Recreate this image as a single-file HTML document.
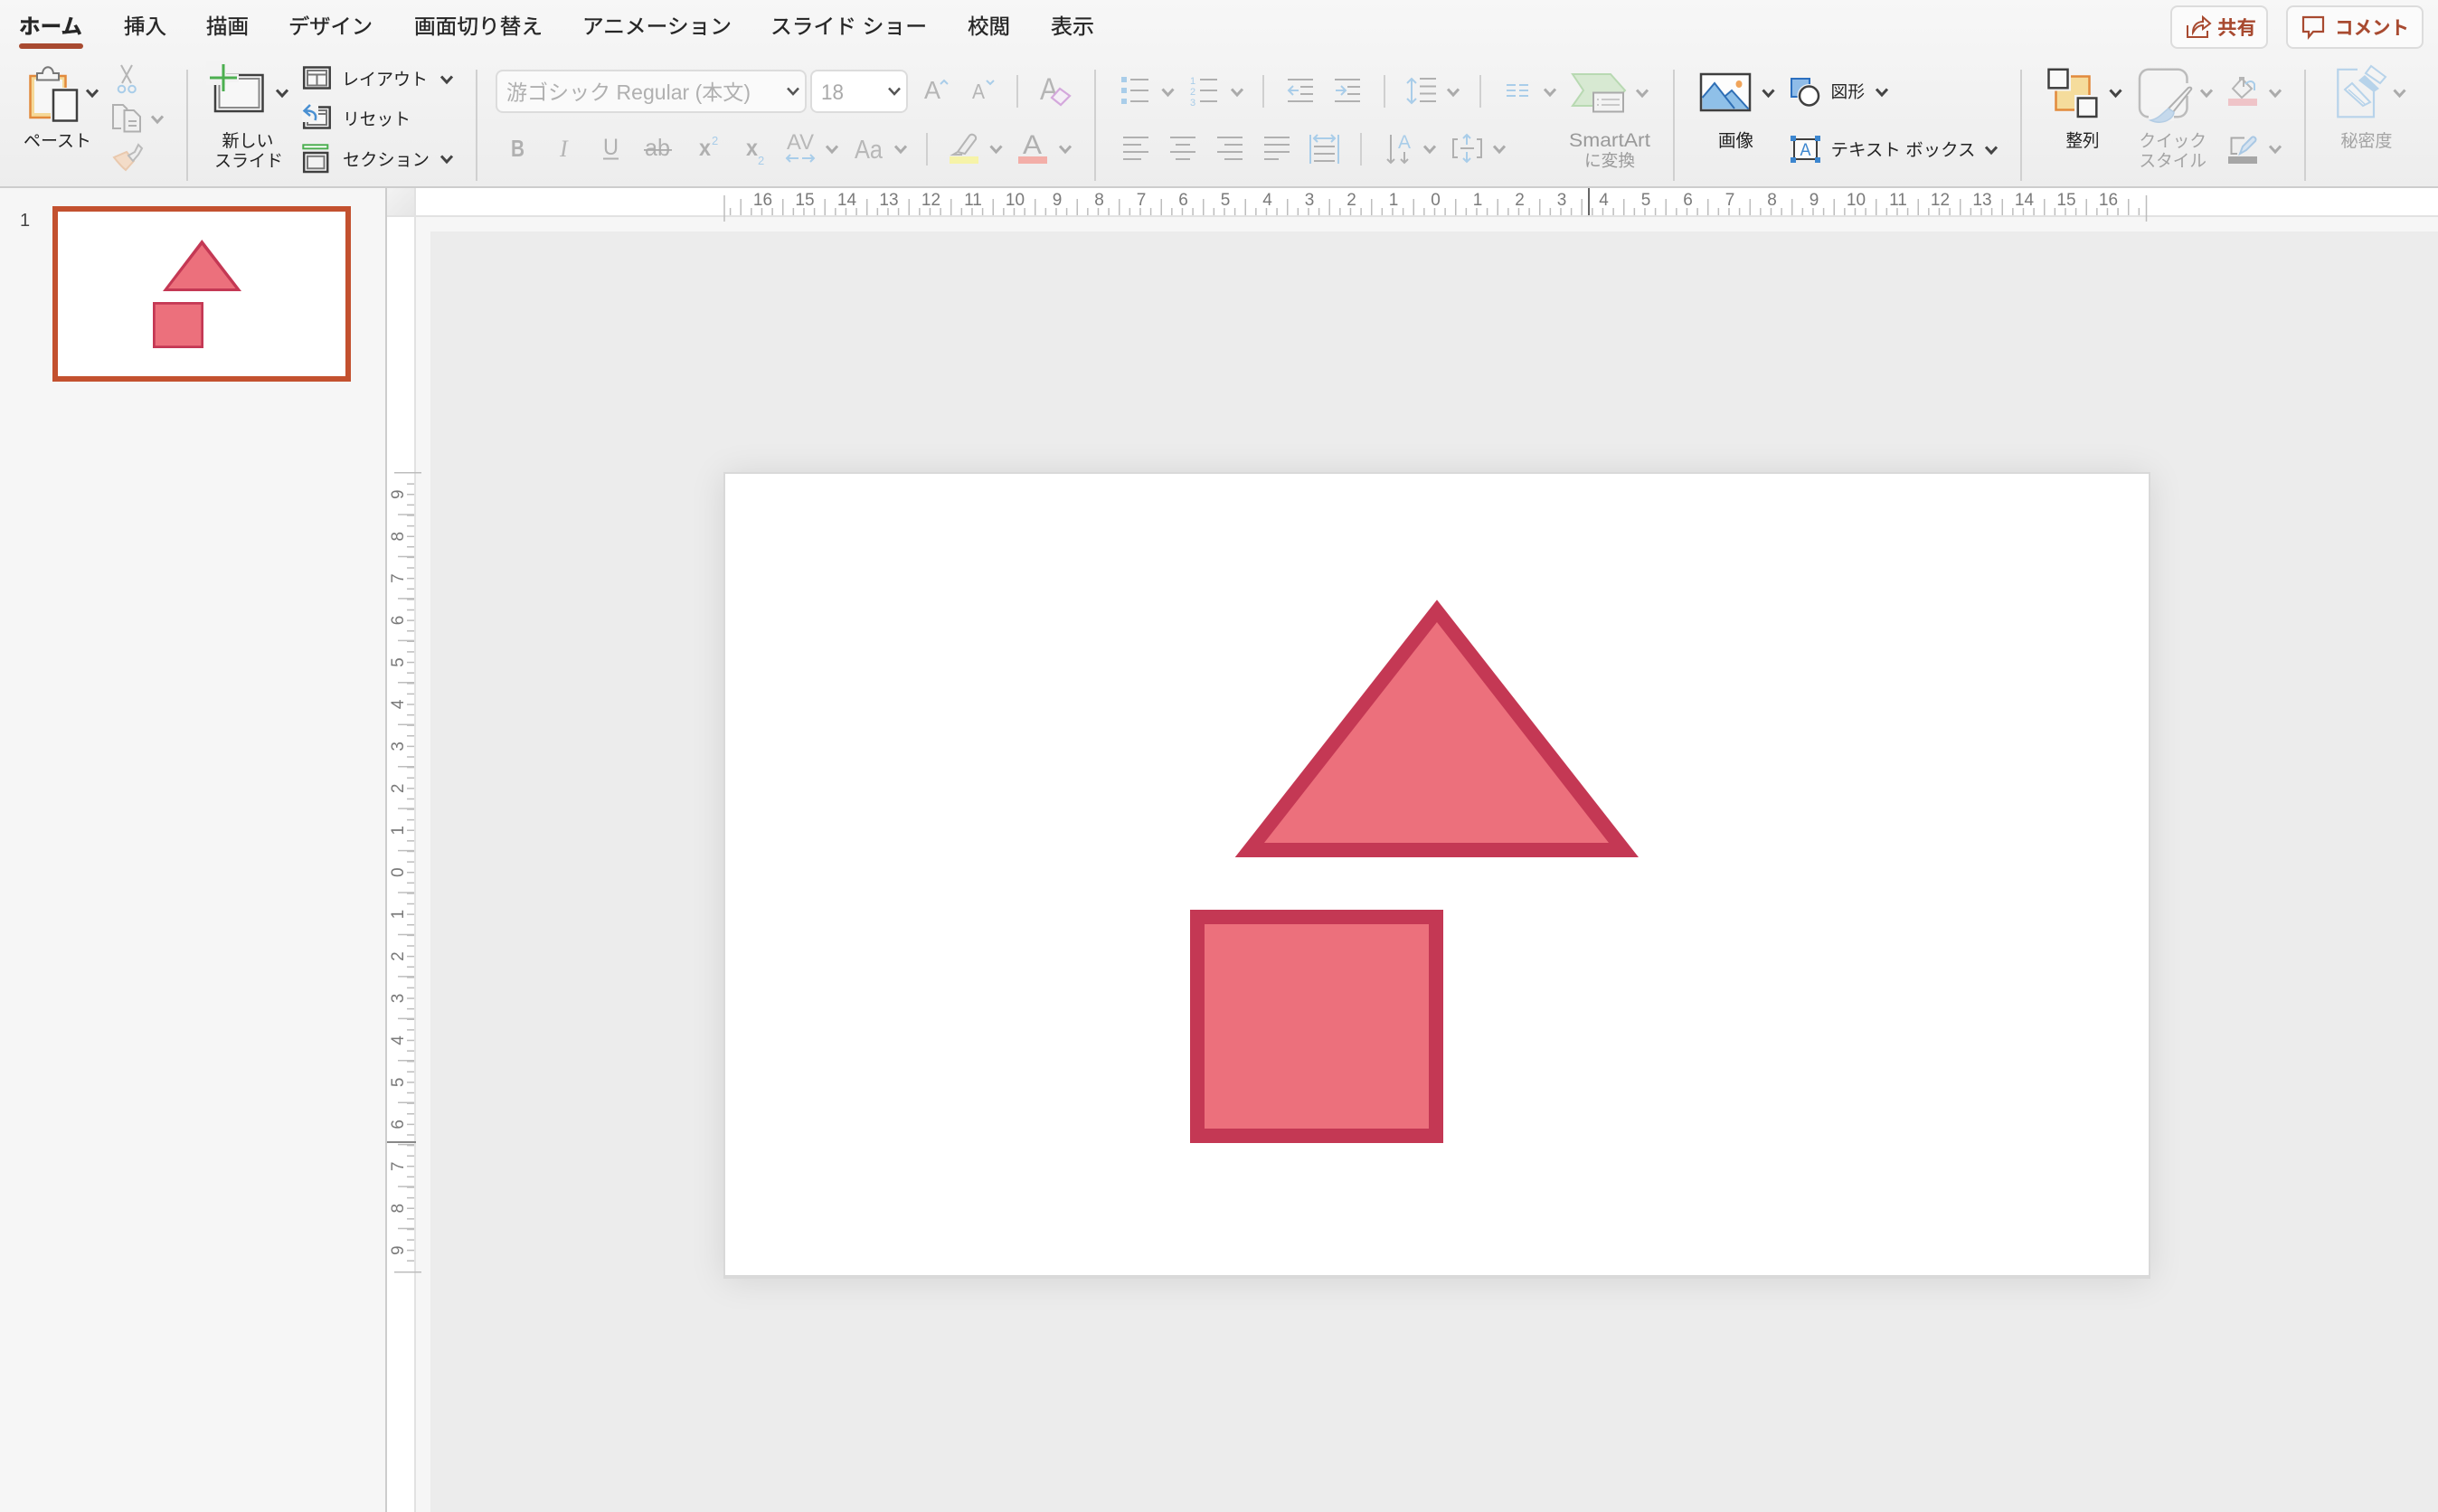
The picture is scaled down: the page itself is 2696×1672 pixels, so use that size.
<!DOCTYPE html>
<html lang="ja"><head><meta charset="utf-8"><title>PowerPoint</title>
<style>
html,body{margin:0;padding:0;width:2696px;height:1672px;overflow:hidden;background:#f6f6f6}
.abs{position:absolute}
#ribbon{left:0;top:0;width:2696px;height:206px;background:linear-gradient(#f7f7f7,#ededed);border-bottom:2px solid #cdcdcd}
#canvas{left:476px;top:256px;width:2220px;height:1416px;background:#ececec;overflow:hidden}
#slide{left:324px;top:266px;width:1578px;height:892px;background:#d9d9d9;box-shadow:0 2px 36px rgba(0,0,0,.1)}
svg{position:absolute;left:0;top:0;font-family:"Liberation Sans","Noto Sans CJK JP",sans-serif}
.k{fill:#222}.g{fill:#a3a3a3}
.tab{fill:#262626;font-size:23px;stroke:#262626;stroke-width:.35px}
.l{stroke:#b0b0b0;stroke-width:2;fill:none}
.b{stroke:#a9cde9;stroke-width:2;fill:none}
.rn{fill:#7a7a7a;font-size:19px;text-anchor:middle;font-family:"Liberation Sans",sans-serif}
.d{stroke:#444;stroke-width:3;fill:none}
.e{stroke:#ababab;stroke-width:3;fill:none}
</style></head><body>
<div id="ribbon" class="abs"></div>
<div class="abs" style="left:426px;top:208px;width:2px;height:1464px;background:#cdcdcd"></div>
<div class="abs" style="left:428px;top:208px;width:31px;height:30px;background:linear-gradient(135deg,#f3f3f3,#e6e6e6)"></div>
<div class="abs" style="left:428px;top:240px;width:30px;height:1432px;background:#fff"></div>
<div class="abs" style="left:460px;top:208px;width:2236px;height:30px;background:#fff"></div>
<div class="abs" style="left:428px;top:238px;width:2268px;height:2px;background:#e2e2e2"></div>
<div class="abs" style="left:458px;top:208px;width:2px;height:1464px;background:#e2e2e2"></div>
<div id="canvas" class="abs"><div id="slide" class="abs"><div class="abs" style="left:2px;top:2px;width:1574px;height:886px;background:#fff"></div></div></div>

<svg width="2696" height="1672" viewBox="0 0 2696 1672" xmlns="http://www.w3.org/2000/svg">
<defs><path id="ch" d="M-6-3.5 0 3 6-3.5"/></defs>

<!-- tabs -->
<text class="tab" x="21" y="37" textLength="70" lengthAdjust="spacingAndGlyphs" style="font-weight:700">ホーム</text>
<rect x="21" y="48" width="71" height="6" rx="3" fill="#a84a30"/>
<text class="tab" x="137" y="37" textLength="47" lengthAdjust="spacingAndGlyphs">挿入</text>
<text class="tab" x="228" y="37" textLength="47" lengthAdjust="spacingAndGlyphs">描画</text>
<text class="tab" x="319" y="37" textLength="93" lengthAdjust="spacingAndGlyphs">デザイン</text>
<text class="tab" x="458" y="37" textLength="142" lengthAdjust="spacingAndGlyphs">画面切り替え</text>
<text class="tab" x="644" y="37" textLength="165" lengthAdjust="spacingAndGlyphs">アニメーション</text>
<text class="tab" x="852" y="37" textLength="173" lengthAdjust="spacingAndGlyphs">スライド ショー</text>
<text class="tab" x="1070" y="37" textLength="47" lengthAdjust="spacingAndGlyphs">校閲</text>
<text class="tab" x="1162" y="37" textLength="48" lengthAdjust="spacingAndGlyphs">表示</text>

<!-- share/comment -->
<rect x="2401" y="7" width="106" height="46" rx="7" fill="#fbfbfb" stroke="#dcdcdc" stroke-width="2"/>
<rect x="2529" y="7" width="150" height="46" rx="7" fill="#fbfbfb" stroke="#dcdcdc" stroke-width="2"/>
<path d="M2419 28V41H2441V34M2425 36C2425 28 2430 24 2436 24V19L2444 26 2436 32V28C2431 28 2428 31 2425 36Z" fill="none" stroke="#a84a30" stroke-width="2"/>
<text x="2452" y="38" font-size="21" font-weight="700" fill="#a84a30" textLength="43" lengthAdjust="spacingAndGlyphs">共有</text>
<path d="M2547 19H2569V35H2558L2553 41V35H2547Z" fill="none" stroke="#a84a30" stroke-width="2.2"/>
<text x="2582" y="38" font-size="21" font-weight="700" fill="#a84a30" textLength="82" lengthAdjust="spacingAndGlyphs">コメント</text>

<!-- separators -->
<g fill="#d0d0d0">
<rect x="206" y="77" width="2" height="123"/><rect x="526" y="77" width="2" height="123"/><rect x="1210" y="77" width="2" height="123"/><rect x="1850" y="77" width="2" height="123"/><rect x="2234" y="77" width="2" height="123"/><rect x="2548" y="77" width="2" height="123"/>
<rect x="1124" y="83" width="2" height="36"/><rect x="1396" y="83" width="2" height="36"/><rect x="1530" y="83" width="2" height="36"/><rect x="1636" y="83" width="2" height="36"/><rect x="1024" y="147" width="2" height="36"/><rect x="1504" y="147" width="2" height="36"/>
</g>

<!-- paste -->
<rect x="33.5" y="84" width="39" height="46" fill="#f5d998" stroke="#e28a3c" stroke-width="2.5"/>
<rect x="38" y="88" width="31" height="37" fill="#f7f7f7"/>
<path d="M41 88.5V81H47C48 72 58 72 59 81H65V88.5Z" fill="#f5f5f5" stroke="#777" stroke-width="2"/>
<rect x="56" y="97" width="32" height="39" fill="#f4f4f4"/>
<rect x="59" y="99.5" width="26" height="34" fill="#f8f8f8" stroke="#3f3f3f" stroke-width="2.5"/>
<use href="#ch" x="102" y="103" class="d"/>
<text class="k" x="26" y="162" font-size="19" textLength="75" lengthAdjust="spacingAndGlyphs">ペースト</text>
<!-- scissors -->
<path d="M134 72 145 92M146 72 135 92" stroke="#b5b5b5" stroke-width="2" fill="none"/>
<circle cx="134.5" cy="98.5" r="3.8" fill="none" stroke="#a9cde9" stroke-width="2"/><circle cx="146" cy="98.5" r="3.8" fill="none" stroke="#a9cde9" stroke-width="2"/>
<!-- copy -->
<path d="M134 142H125V116H136L141 121M137.500 122H148L155 129V145.500H137.500Z" class="l" stroke-width="2"/>
<path d="M142 134H151M142 139H151" class="l"/>
<use href="#ch" x="174" y="132" class="e"/>
<!-- brush -->
<path d="M126 174 140 168 148 178 139 188C134 184 130 179 126 174Z" fill="#f3dcc8" stroke="#e9c9ae" stroke-width="2"/>
<path d="M142 172 149 168 153 160 157 164 153 171 147 178Z" fill="#eee" stroke="#bbb" stroke-width="2"/>

<!-- new slide -->
<rect x="238" y="83" width="52.500" height="40" fill="#f7f7f7" stroke="#3f3f3f" stroke-width="2.500"/>
<rect x="242.500" y="87" width="44" height="32" fill="none" stroke="#8a8a8a" stroke-width="2"/>
<rect x="228" y="68" width="22" height="26" fill="#f3f3f3"/>
<rect x="250" y="82" width="14" height="9" fill="#f3f3f3"/>
<rect x="232" y="84.500" width="30" height="3" fill="#4caf50"/><rect x="245.500" y="71" width="3" height="30" fill="#4caf50"/>
<use href="#ch" x="312" y="103" class="d"/>
<text class="k" x="245.500" y="162" font-size="19" textLength="57" lengthAdjust="spacingAndGlyphs">新しい</text>
<text class="k" x="237" y="184" font-size="19" textLength="76" lengthAdjust="spacingAndGlyphs">スライド</text>
<!-- layout -->
<rect x="336.200" y="74.500" width="28.500" height="23" fill="#f8f8f8" stroke="#3f3f3f" stroke-width="2.500"/>
<path d="M340 78H361V94.500H340ZM340 82.500H361M350.500 82.500V94.500" fill="none" stroke="#777" stroke-width="2"/>
<text class="k" x="378" y="94" font-size="19" textLength="95" lengthAdjust="spacingAndGlyphs">レイアウト</text>
<use href="#ch" x="494" y="88" class="d"/>
<!-- reset -->
<rect x="336.200" y="118.500" width="28.500" height="23" fill="#f8f8f8" stroke="#3f3f3f" stroke-width="2.500"/>
<path d="M340 122H361V138H340ZM340 126H361" fill="none" stroke="#777" stroke-width="2"/>
<rect x="334" y="114" width="18" height="21" fill="#f4f4f4"/>
<path d="M348.500 133C351 125 345 122 338 122.500M343 116 336.500 122.500 343 128" fill="none" stroke="#4a90d2" stroke-width="2.500"/>
<text class="k" x="379" y="138" font-size="19" textLength="75" lengthAdjust="spacingAndGlyphs">リセット</text>
<!-- section -->
<rect x="335.300" y="160.300" width="27" height="4" fill="#fff" stroke="#4caf50" stroke-width="2"/>
<rect x="336.200" y="169" width="26" height="21" fill="#f8f8f8" stroke="#3f3f3f" stroke-width="2.500"/>
<rect x="340" y="172.800" width="18.500" height="13.500" fill="#f2f2f2" stroke="#777" stroke-width="2"/>
<text class="k" x="379" y="183" font-size="19" textLength="96" lengthAdjust="spacingAndGlyphs">セクション</text>
<use href="#ch" x="494" y="176" class="d"/>

<!-- font boxes -->
<rect x="549" y="78" width="342" height="46" rx="7" fill="#fafafa" stroke="#dcdcdc" stroke-width="2"/>
<text x="560" y="110" font-size="23" fill="#b0b0b0" textLength="270" lengthAdjust="spacingAndGlyphs">游ゴシック Regular (本文)</text>
<use href="#ch" x="877" y="101" stroke="#555" stroke-width="2.500" fill="none"/>
<rect x="897" y="78" width="106" height="46" rx="7" fill="#fff" stroke="#dcdcdc" stroke-width="2"/>
<text x="908" y="110" font-size="24" fill="#aaa" textLength="25" lengthAdjust="spacingAndGlyphs">18</text>
<use href="#ch" x="989" y="101" stroke="#555" stroke-width="2.500" fill="none"/>

<!-- font size up/down, clear -->
<text x="1022" y="109" font-size="28" fill="#b5b5b5" textLength="18" lengthAdjust="spacingAndGlyphs">A</text>
<path d="M1040 93 1044 89 1048 93" class="b"/>
<text x="1075" y="109" font-size="23" fill="#b5b5b5" textLength="14" lengthAdjust="spacingAndGlyphs">A</text>
<path d="M1091 89 1095 93 1099 89" class="b"/>
<text x="1150" y="110" font-size="34" fill="#b5b5b5" textLength="20" lengthAdjust="spacingAndGlyphs">A</text>
<path d="M1172 98 1183 106 1173 116 1163 108Z" fill="#f4eef6" stroke="#d4a8dc" stroke-width="2.200"/>

<!-- row 2 format -->
<g fill="#b0b0b0">
<text x="565" y="173" font-size="26" font-weight="700" textLength="15" lengthAdjust="spacingAndGlyphs">B</text>
<text x="619" y="173" font-size="26" font-style="italic" font-family="Liberation Serif" fill="#b5b5b5">I</text>
<text x="667" y="171" font-size="25" textLength="17" lengthAdjust="spacingAndGlyphs">U</text>
<text x="713" y="172" font-size="26" textLength="28" lengthAdjust="spacingAndGlyphs">ab</text>
<text x="773" y="172" font-size="26" font-weight="700" textLength="13" lengthAdjust="spacingAndGlyphs">x</text>
<text x="825" y="172" font-size="26" font-weight="700" textLength="13" lengthAdjust="spacingAndGlyphs">x</text>
<text x="870" y="165" font-size="24" fill="#b8b8b8" textLength="30" lengthAdjust="spacingAndGlyphs">AV</text>
<text x="945" y="175" font-size="29" fill="#b8b8b8" textLength="31" lengthAdjust="spacingAndGlyphs">Aa</text>
</g>
<rect x="667" y="174.500" width="17" height="2" fill="#b0b0b0"/><rect x="712" y="165" width="31" height="1.800" fill="#aaa"/>
<text x="787" y="160" font-size="13" fill="#a9cde9">2</text><text x="838" y="182" font-size="13" fill="#a9cde9">2</text>
<path d="M870 175H883M874 171 870 175 874 179M887 175H900M896 171 900 175 896 179" class="b"/>
<use href="#ch" x="920" y="165" class="e"/><use href="#ch" x="996" y="165" class="e"/>
<!-- highlighter -->
<path d="M1059 168 1072 150C1075 147 1080 150 1079 154L1067 170ZM1059 168 1054 171H1064" fill="#eee" stroke="#b5b5b5" stroke-width="2"/>
<rect x="1050" y="173" width="32" height="8" fill="#f6f3a8"/>
<use href="#ch" x="1101.500" y="165" class="e"/>
<text x="1131" y="170" font-size="30" fill="#b0b0b0" textLength="21" lengthAdjust="spacingAndGlyphs">A</text>
<rect x="1126" y="173" width="32" height="8" fill="#f3aea8"/>
<use href="#ch" x="1178" y="165" class="e"/>

<!-- paragraph row 1 -->
<g fill="#a9cde9"><rect x="1240" y="85" width="6" height="6"/><rect x="1240" y="97" width="6" height="6"/><rect x="1240" y="109" width="6" height="6"/></g>
<path class="l" d="M1250 88H1270M1250 100H1270M1250 112H1270M1327 88H1346M1327 100H1346M1327 112H1346M1424 88H1452M1424 112H1452M1438 96H1452M1438 104H1452M1476 88H1504M1476 112H1504M1490 96H1504M1490 104H1504M1570 87H1588M1570 95.500H1588M1570 103.500H1588M1570 112H1588"/>
<g fill="#a9cde9" font-size="11"><text x="1316" y="93">1</text><text x="1316" y="105">2</text><text x="1316" y="117">3</text></g>
<use href="#ch" x="1291.500" y="102" class="e"/><use href="#ch" x="1368" y="102" class="e"/>
<path class="b" d="M1436 100H1425M1430 95 1425 100 1430 105M1477 100H1488M1483 95 1488 100 1483 105M1561 88V113M1556 92 1561 87 1566 92M1556 109 1561 114 1566 109"/>
<use href="#ch" x="1607" y="102" class="e"/>
<path class="b" d="M1666 94H1676M1680 94H1690M1666 100H1676M1680 100H1690M1666 106H1676M1680 106H1690"/>
<use href="#ch" x="1714" y="102" class="e"/>
<!-- smartart -->
<path d="M1739 82H1781L1797 100 1781 117H1739L1751 100Z" fill="#d7e9d2" stroke="#b8d9b2" stroke-width="2"/>
<rect x="1762" y="102.500" width="33" height="21" fill="#f3f3f3" stroke="#aaa" stroke-width="2"/>
<path d="M1766 110H1768M1771 110H1791M1766 116H1768M1771 116H1791" stroke="#bbb" stroke-width="1.500"/>
<use href="#ch" x="1816" y="103" class="e"/>
<text x="1735" y="162" font-size="21" fill="#9a9a9a" textLength="90" lengthAdjust="spacingAndGlyphs">SmartArt</text>
<text x="1752" y="184" font-size="18.500" fill="#9a9a9a" textLength="56" lengthAdjust="spacingAndGlyphs">に変換</text>

<!-- paragraph row 2 -->
<path class="l" d="M1242 152H1270M1242 160H1262M1242 168H1270M1242 176H1262M1294 152H1322M1300 160H1316M1294 168H1322M1300 176H1316M1346 152H1374M1354 160H1374M1346 168H1374M1354 176H1374M1398 152H1426M1398 160H1426M1398 168H1426M1398 176H1414M1453 162H1476M1453 170H1476M1453 178H1476"/>
<path class="b" d="M1449 149V181M1480 149V181M1453 153H1476M1457 149 1453 153 1457 157M1472 149 1476 153 1472 157"/>
<path class="l" d="M1538 149V180M1534 176 1538 180 1542 176M1553 168V180M1549 176 1553 180 1557 176"/>
<text x="1546" y="164" font-size="21" fill="#a9cde9" textLength="14" lengthAdjust="spacingAndGlyphs">A</text>
<use href="#ch" x="1581" y="165" class="e"/>
<path class="l" d="M1612 154H1607V174H1612M1633 154H1638V174H1633M1615 164H1630"/>
<path class="b" d="M1622 149V160M1618 153 1622 149 1626 153M1622 168V179M1618 175 1622 179 1626 175"/>
<use href="#ch" x="1658" y="165" class="e"/>

<!-- picture -->
<rect x="1881" y="82" width="54" height="40" fill="#fdfdfd" stroke="#3f3f3f" stroke-width="2.500"/>
<path d="M1882.500 108 1896 92 1908 106 1915 100 1933.500 120.500H1882.500Z" fill="#8fc0e8"/>
<path d="M1882.500 108 1896 92 1918 120M1908 106 1915 100 1933.500 120.500" fill="none" stroke="#2f6fb5" stroke-width="2"/>
<ellipse cx="1923" cy="93" rx="3.500" ry="4" fill="#f0a45a"/>
<use href="#ch" x="1955.500" y="103" class="d"/>
<text class="k" x="1900" y="162" font-size="19.500" textLength="39" lengthAdjust="spacingAndGlyphs">画像</text>
<!-- shapes -->
<rect x="1981" y="87" width="20" height="20" fill="#8fbce8" stroke="#2c6fbf" stroke-width="2"/>
<circle cx="2000.500" cy="106" r="13" fill="#f3f3f3"/><circle cx="2000.500" cy="106" r="10.500" fill="#fff" stroke="#3f3f3f" stroke-width="2.500"/>
<text class="k" x="2024.500" y="108" font-size="18.500" textLength="37.500" lengthAdjust="spacingAndGlyphs">図形</text>
<use href="#ch" x="2081" y="102" class="d"/>
<!-- textbox -->
<rect x="1984" y="154" width="25" height="22" fill="#fbfbfb" stroke="#3f3f3f" stroke-width="2"/>
<g fill="#3c86cf"><rect x="1980" y="150" width="6" height="6"/><rect x="2007" y="150" width="6" height="6"/><rect x="1980" y="174" width="6" height="6"/><rect x="2007" y="174" width="6" height="6"/></g>
<text x="1990.500" y="172" font-size="19" fill="#3c86cf" textLength="12" lengthAdjust="spacingAndGlyphs">A</text>
<text class="k" x="2024.500" y="172" font-size="19" textLength="160" lengthAdjust="spacingAndGlyphs">テキスト ボックス</text>
<use href="#ch" x="2202" y="166" class="d"/>

<!-- arrange -->
<rect x="2273.500" y="84.500" width="37" height="37" fill="#f5dc9c" stroke="#e28a3c" stroke-width="2.500"/>
<rect x="2262" y="73.500" width="28" height="27" fill="#f4f4f4"/><rect x="2294" y="105" width="28" height="27" fill="#f4f4f4"/>
<rect x="2265.500" y="76.800" width="21" height="20.500" fill="#f9f9f9" stroke="#3f3f3f" stroke-width="2.500"/>
<rect x="2297.800" y="108.500" width="20.500" height="20.500" fill="#f9f9f9" stroke="#3f3f3f" stroke-width="2.500"/>
<use href="#ch" x="2339.500" y="103" class="d"/>
<text class="k" x="2284.500" y="162" font-size="19.500" textLength="37" lengthAdjust="spacingAndGlyphs">整列</text>
<!-- quick style -->
<rect x="2366" y="76.800" width="52.500" height="52.500" rx="10" fill="#f4f4f4" stroke="#bcbcbc" stroke-width="2.500"/>
<rect x="2376" y="118" width="28" height="16" fill="#f3f3f3"/>
<rect x="2414" y="92" width="12" height="14" fill="#f3f3f3"/>
<path d="M2398 120 2420 97C2422 96 2424 97 2423 99L2403 124Z" fill="#f4f4f4" stroke="#b0b0b0" stroke-width="2"/>
<path d="M2378 133C2388 131 2392 124 2398 120L2404 124C2404 131 2392 139 2378 133Z" fill="#c5d9ec" stroke="#b4cde4" stroke-width="1.500"/>
<use href="#ch" x="2440" y="103" class="e"/>
<text class="g" x="2365.500" y="162" font-size="19" textLength="74.500" lengthAdjust="spacingAndGlyphs">クイック</text>
<text class="g" x="2365.500" y="184" font-size="19" textLength="74.500" lengthAdjust="spacingAndGlyphs">スタイル</text>
<!-- fill / outline -->
<path d="M2469 98 2479 87 2490 98 2479 108ZM2477 89V86H2481V96" fill="none" stroke="#b5b5b5" stroke-width="2"/>
<path d="M2483 93C2487 89 2491 89 2493 93V100" fill="none" stroke="#a9cde9" stroke-width="2"/>
<rect x="2464" y="109" width="32" height="8" fill="#efc4c8"/>
<use href="#ch" x="2516" y="103" class="e"/>
<path d="M2482 152.500H2467.500V170H2474" fill="none" stroke="#aaa" stroke-width="2"/>
<path d="M2477 170 2480 162 2490 152C2492 150 2496 153 2494 156L2484 166Z" fill="#d7e4f1" stroke="#a9c8e4" stroke-width="2"/>
<rect x="2464" y="173" width="32" height="8" fill="#a6a6a6"/>
<use href="#ch" x="2516" y="165" class="e"/>
<!-- sensitivity -->
<path d="M2607 76.800H2585.300V129.300H2625V93" fill="none" stroke="#b7d3ea" stroke-width="2.200"/>
<path d="M2593 99 2601 92 2621 113 2613 117Z" fill="#f4f4f4" stroke="#b7d3ea" stroke-width="2"/>
<path d="M2597 99 2615 115" stroke="#b7d3ea" stroke-width="1.500"/>
<path d="M2608 89 2615 83 2631 98 2625 102Z" fill="#b7d3ea"/>
<path d="M2616 81 2622 73 2638 85 2632 92Z" fill="#f4f4f4" stroke="#b7d3ea" stroke-width="2"/>
<use href="#ch" x="2653.500" y="103" class="e"/>
<text class="g" x="2588.500" y="162" font-size="19" textLength="57" lengthAdjust="spacingAndGlyphs">秘密度</text>

<!-- thumbnail pane -->
<text x="22" y="250" font-size="20" fill="#444">1</text>
<rect x="61" y="231" width="324" height="188" fill="#fff" stroke="#c3512f" stroke-width="6"/>
<polygon points="223.300,265 180,322 267,322" fill="#c43854"/>
<polygon points="223.300,271 186,319 260.500,319" fill="#ec707c"/>
<rect x="169" y="334" width="56" height="51" fill="#c43854"/>
<rect x="171.700" y="336.700" width="50.600" height="45.600" fill="#ec707c"/>

<!-- main shapes -->
<polygon points="1589,663.300 1365.700,948 1812,948" fill="#c43854"/>
<polygon points="1589,688 1398,932 1779,932" fill="#ec707c"/>
<rect x="1316" y="1006" width="280" height="258" fill="#c43854"/>
<rect x="1332" y="1022" width="248" height="226" fill="#ec707c"/>

<!-- horizontal ruler ticks -->
<g stroke="#bdbdbd" fill="none">
<line x1="806.850" x2="2373" y1="234" y2="234" stroke-width="8" stroke-dasharray="1.500 10.125"/>
<line x1="818.500" x2="2373" y1="229" y2="229" stroke-width="18" stroke-dasharray="1.500 45"/>
<line x1="801" x2="801" y1="216" y2="245" stroke-width="1.500"/>
<line x1="2373.500" x2="2373.500" y1="216" y2="245" stroke-width="1.500"/>
</g>
<rect x="1756" y="208" width="2" height="30" fill="#666"/>
<g class="rn" transform="translate(1 0)">
<text x="842.500" y="227">16</text><text x="889" y="227">15</text><text x="935.500" y="227">14</text><text x="982" y="227">13</text><text x="1028.500" y="227">12</text><text x="1075" y="227">11</text><text x="1121.500" y="227">10</text><text x="1168" y="227">9</text><text x="1214.500" y="227">8</text><text x="1261" y="227">7</text><text x="1307.500" y="227">6</text><text x="1354" y="227">5</text><text x="1400.500" y="227">4</text><text x="1447" y="227">3</text><text x="1493.500" y="227">2</text><text x="1540" y="227">1</text><text x="1586.500" y="227">0</text><text x="1633" y="227">1</text><text x="1679.500" y="227">2</text><text x="1726" y="227">3</text><text x="1772.500" y="227">4</text><text x="1819" y="227">5</text><text x="1865.500" y="227">6</text><text x="1912" y="227">7</text><text x="1958.500" y="227">8</text><text x="2005" y="227">9</text><text x="2051.500" y="227">10</text><text x="2098" y="227">11</text><text x="2144.500" y="227">12</text><text x="2191" y="227">13</text><text x="2237.500" y="227">14</text><text x="2284" y="227">15</text><text x="2330.500" y="227">16</text>
</g>

<!-- vertical ruler ticks -->
<g stroke="#bdbdbd" fill="none">
<line x1="454" x2="454" y1="534.400" y2="1396" stroke-width="8" stroke-dasharray="1.500 10.110"/>
<line x1="449" x2="449" y1="568.300" y2="1362" stroke-width="18" stroke-dasharray="1.500 44.940"/>
<line x1="436" x2="466" y1="522.700" y2="522.700" stroke-width="1.500"/>
<line x1="436" x2="466" y1="1406.700" y2="1406.700" stroke-width="1.500"/>
</g>
<rect x="428" y="1262" width="32" height="2" fill="#888"/>
<g class="rn">
<text transform="translate(446 546.700) rotate(-90)">9</text><text transform="translate(446 593.200) rotate(-90)">8</text><text transform="translate(446 639.600) rotate(-90)">7</text><text transform="translate(446 686) rotate(-90)">6</text><text transform="translate(446 732.500) rotate(-90)">5</text><text transform="translate(446 778.900) rotate(-90)">4</text><text transform="translate(446 825.400) rotate(-90)">3</text><text transform="translate(446 871.800) rotate(-90)">2</text><text transform="translate(446 918.300) rotate(-90)">1</text><text transform="translate(446 964.700) rotate(-90)">0</text><text transform="translate(446 1011.100) rotate(-90)">1</text><text transform="translate(446 1057.600) rotate(-90)">2</text><text transform="translate(446 1104) rotate(-90)">3</text><text transform="translate(446 1150.500) rotate(-90)">4</text><text transform="translate(446 1196.900) rotate(-90)">5</text><text transform="translate(446 1243.300) rotate(-90)">6</text><text transform="translate(446 1289.800) rotate(-90)">7</text><text transform="translate(446 1336.200) rotate(-90)">8</text><text transform="translate(446 1382.700) rotate(-90)">9</text>
</g>
</svg>
</body></html>
